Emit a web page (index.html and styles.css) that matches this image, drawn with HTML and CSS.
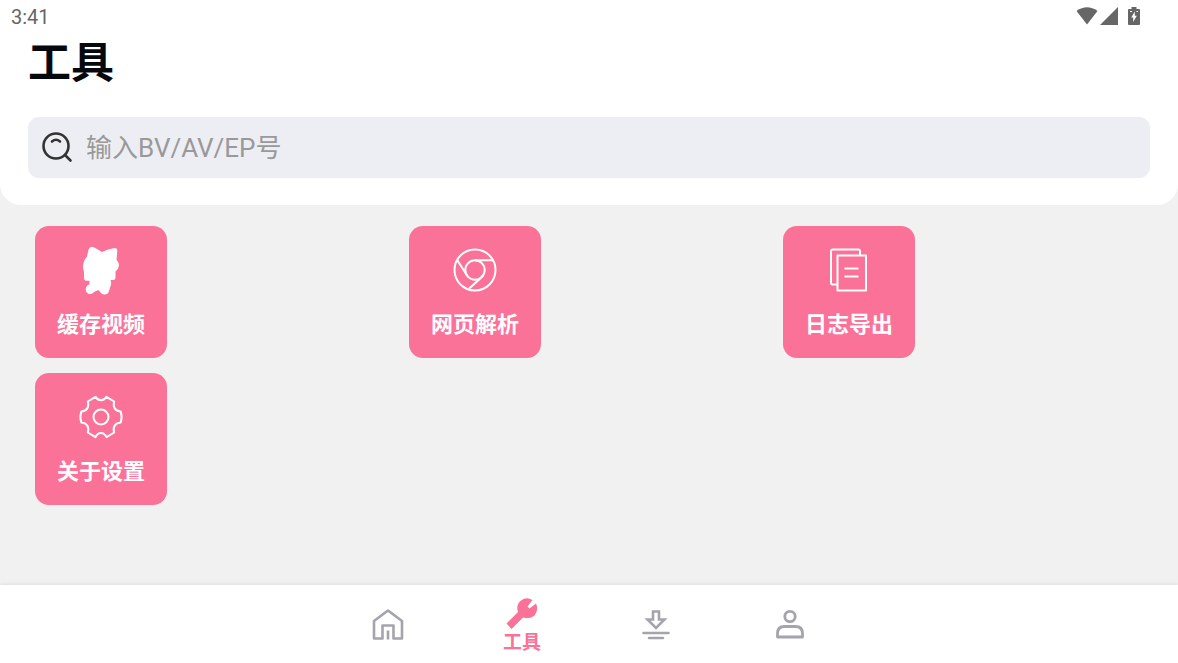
FILE: index.html
```html
<!DOCTYPE html>
<html lang="zh-CN">
<head>
    <meta charset="UTF-8">
    <meta name="viewport" content="width=device-width, initial-scale=1.0">
    <title>工具</title>
    <link rel="stylesheet" href="styles.css">
</head>
<body>

<header class="header">
    <div class="status-bar">
        <span class="time">3:41</span>
        <div class="status-icons">
            <svg width="22" height="18" viewBox="0 0 22 18"><path d="M0.500 4Q11-3.500 21.500 4L11 17.500z" fill="#666"/></svg>
            <svg width="18" height="18" viewBox="0 0 18 18"><path d="M18 0v18H0z" fill="#666"/></svg>
            <svg class="battery" width="12" height="18" viewBox="0 0 12 18"><path d="M3.500 0h5v2H11q1 0 1 1v14q0 1-1 1H1q-1 0-1-1V3q0-1 1-1h2.500z" fill="#666"/><path d="M6.800 4.500v4.200h2L5.200 15v-4.500h-2z" fill="#fff"/><path d="M2 4h2v1H2zM8.500 4h1.500v1H8.500z" fill="#fff"/></svg>
        </div>
    </div>

    <h1 class="title">工具</h1>

    <form class="search">
        <label for="keyword" aria-label="搜索">
            <svg width="30" height="30" viewBox="0 0 30 30" fill="none" stroke="#333" stroke-width="2.600" stroke-linecap="round"><circle cx="14" cy="13" r="12.500"/><path d="M10 8.500Q14 5 18 8.500M23 22l5.500 5.500"/></svg>
        </label>
        <input type="text" id="keyword" placeholder="输入BV/AV/EP号">
    </form>
</header>

<main class="tools">
    <button type="button" class="tool">
        <svg width="50" height="50" viewBox="0 0 50 50" fill="#fff"><path d="M12.500 4.500Q14 0.800 18 2.200L26 7Q32 4 38.500 3Q41.500 3 41.300 6L40.500 14.500Q43 18 43 20.500 42.500 24 39.500 26.500V32Q39.500 35 37.500 35H34.500Q36 39 34.200 42L33 46Q32 49.500 28.500 49.500 26.500 49.500 25 48L22.500 45Q19 46 17.500 47.500 14.500 50 12 48.500 9 46.500 9.800 43 10.500 40.500 13.500 39V35.800H10Q8 35.500 8 33V27Q6 21 8 16.500 9 13.500 11 11.500z"/></svg>
        <span>缓存视频</span>
    </button>
    <button type="button" class="tool">
        <svg width="50" height="50" viewBox="0 0 50 50" fill="none" stroke="#fff" stroke-width="2"><circle cx="25" cy="25" r="20.500"/><circle cx="25" cy="25" r="9.700"/><path d="M25 15.300H43M7.500 15.500L16.600 29.800M33 30.500Q30 34 19.200 43.500"/></svg>
        <span>网页解析</span>
    </button>
    <button type="button" class="tool">
        <svg width="50" height="50" viewBox="0 0 50 50" fill="none" stroke="#fff" stroke-width="2" stroke-linejoin="round"><path d="M12.500 39.500H9Q7 39.500 7 38V6Q7 4.500 9 4.500H34.500Q36 4.500 36 6V10.500M13.500 10.500H42V45.500H13.500zM20.500 23.500h14M20.500 31.500h14"/></svg>
        <span>日志导出</span>
    </button>
    <button type="button" class="tool">
        <svg width="50" height="50" viewBox="0 0 50 50" fill="none" stroke="#fff" stroke-width="2" stroke-linejoin="round"><circle cx="25" cy="25" r="7.500"/><path d="M19.500 4.800L11.800 9.500C13.500 15 11 19 5.300 19.500Q3.500 25 5.300 30.500C11 31 13.500 35 11.800 40.500L19.500 45.200C22 39.500 28 39.500 30.500 45.200L38.200 40.500C36.500 35 39 31 44.700 30.500Q46.500 25 44.700 19.500C39 19 36.500 15 38.200 9.500L30.500 4.800C28 9.500 22 9.500 19.500 4.800z"/></svg>
        <span>关于设置</span>
    </button>
</main>

<nav class="tabs">
    <a href="#" class="tab" aria-label="首页">
        <svg width="34" height="34" viewBox="0 0 34 34" fill="none" stroke="#a4a4ac" stroke-width="2.600" stroke-linejoin="round"><path d="M3 14L17 3.500 31 14V31.500H22.500V18.500H11.500V31.500H3z"/><path d="M17 23.500v9"/></svg>
    </a>
    <a href="#" class="tab active">
        <svg width="34" height="34" viewBox="0 0 34 34"><path d="M27.500 3Q21.500-0.500 16 3.500 10.500 8 13 15L1.500 26.500 6.500 32 18 20.500Q25 22.500 29.500 18.500 34 13 31 6.500L24.500 11.500 22.500 9.500z" fill="#fb7299"/></svg>
        <span>工具</span>
    </a>
    <a href="#" class="tab" aria-label="下载">
        <svg width="34" height="34" viewBox="0 0 34 34" fill="none" stroke="#a4a4ac" stroke-width="2.600" stroke-linecap="round"><path d="M14 4.500h6V12.500h5.500L17 21 8.500 12.500H14zM4.500 26h25M10 31h14"/></svg>
    </a>
    <a href="#" class="tab" aria-label="我的">
        <svg width="34" height="34" viewBox="0 0 34 34" fill="none" stroke="#a4a4ac" stroke-width="2.800" stroke-linejoin="round"><circle cx="17" cy="9.500" r="5.200"/><path d="M4.500 30V26.500Q4.500 19.500 11.500 19.500H22.500Q29.500 19.500 29.500 26.500V30z"/></svg>
    </a>
</nav>

</body>
</html>
```
FILE: styles.css
```css
* {
    box-sizing: border-box;
}

body {
    font-family: Roboto, "Noto Sans CJK SC", sans-serif;
    background-color: #f1f1f1;
    margin: 0;
    min-height: 100vh;
    display: flex;
    flex-direction: column;
}

svg {
    display: block;
    overflow: visible;
}

.header {
    background-color: #fff;
    border-radius: 0 0 21px 21px;
    padding: 0 28px 27px;
}

.status-bar {
    display: flex;
    justify-content: space-between;
    align-items: center;
    height: 32px;
    margin: 0 -17px;
}

.time {
    font-size: 20px;
    color: #666;
    padding-top: 2px;
}

.status-icons {
    display: flex;
    gap: 2px;
    padding-right: 27px;
}

.battery {
    margin-left: 8px;
}

.title {
    margin: 0 0 23px;
    font-size: 43px;
    line-height: 62px;
    color: #05080d;
}

.search {
    display: flex;
    align-items: center;
    gap: 14px;
    height: 61px;
    padding: 0 14px;
    background-color: #edeef3;
    border-radius: 11px;
}

.search input {
    flex: 1;
    min-width: 0;
    padding: 0;
    border: none;
    outline: none;
    background: none;
    font-family: inherit;
    font-size: 26px;
    color: #333;
}

.search input::placeholder {
    color: #999;
}

.tools {
    flex: 1;
    display: grid;
    grid-template-columns: repeat(3, 1fr);
    align-content: start;
    row-gap: 15px;
    padding: 21px 28px;
}

.tool {
    width: 132px;
    height: 132px;
    margin: 0 7px;
    padding: 2px 0 0;
    display: flex;
    flex-direction: column;
    align-items: center;
    justify-content: center;
    gap: 14px;
    border: none;
    border-radius: 14px;
    background-color: #fb7299;
    color: #fff;
    font-family: inherit;
    font-size: 22px;
    font-weight: bold;
    line-height: 32px;
    cursor: pointer;
}

.tabs {
    display: flex;
    justify-content: center;
    height: 78px;
    background-color: #fff;
    box-shadow: 0 -1px 3px rgba(0, 0, 0, 0.08);
}

.tab {
    flex: 0 1 134px;
    display: flex;
    flex-direction: column;
    align-items: center;
    justify-content: center;
    color: #a4a4ac;
    font-size: 19px;
    font-weight: bold;
    line-height: 24px;
    text-decoration: none;
}

.tab.active {
    padding-top: 4px;
    color: #fb7299;
}
```
